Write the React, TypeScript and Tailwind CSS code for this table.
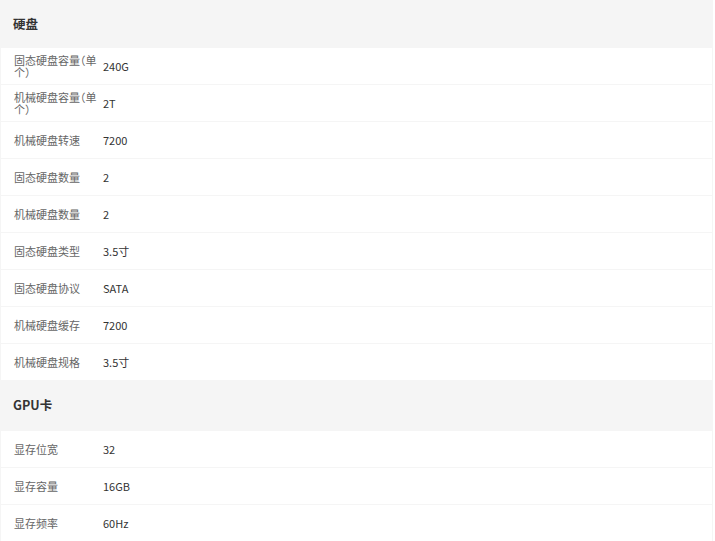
import { FC } from 'react';

type Spec = { label: string; value: string };

const diskSpecs: Spec[] = [
  { label: '固态硬盘容量（单个）', value: '240G' },
  { label: '机械硬盘容量（单个）', value: '2T' },
  { label: '机械硬盘转速', value: '7200' },
  { label: '固态硬盘数量', value: '2' },
  { label: '机械硬盘数量', value: '2' },
  { label: '固态硬盘类型', value: '3.5寸' },
  { label: '固态硬盘协议', value: 'SATA' },
  { label: '机械硬盘缓存', value: '7200' },
  { label: '机械硬盘规格', value: '3.5寸' },
];

const gpuSpecs: Spec[] = [
  { label: '显存位宽', value: '32' },
  { label: '显存容量', value: '16GB' },
  { label: '显存频率', value: '60Hz' },
];

const SpecRow: FC<{ spec: Spec; first?: boolean }> = ({ spec, first }) => (
  <div className={`flex items-center h-9 ml-px mr-px bg-white ${first ? '' : 'mt-px'}`}>
    <div className="w-[84px] ml-[13px] mr-[5px] text-[11px] leading-[12px] text-[#666] [font-feature-settings:'halt']">
      {spec.label}
    </div>
    <div className="text-[11px] leading-[12px] text-[#333]">{spec.value}</div>
  </div>
);

const Section: FC<{ title: string; specs: Spec[]; headClass: string }> = ({ title, specs, headClass }) => (
  <section>
    <div className={`flex items-center px-[13px] ${headClass}`}>
      <h3 className="text-[12.5px] font-bold text-[#333]">{title}</h3>
    </div>
    {specs.map((spec, i) => (
      <SpecRow key={spec.label} spec={spec} first={i === 0} />
    ))}
  </section>
);

const App: FC = () => {
  return (
    <div className="w-[714px] h-[541px] overflow-hidden bg-white font-['Noto_Sans_CJK_SC',sans-serif]">
      <div className="w-[713px] bg-[#f5f5f5]">
        <Section title="硬盘" specs={diskSpecs} headClass="h-12" />
        <Section title="GPU卡" specs={gpuSpecs} headClass="h-[51px]" />
      </div>
    </div>
  );
};

export default App;
